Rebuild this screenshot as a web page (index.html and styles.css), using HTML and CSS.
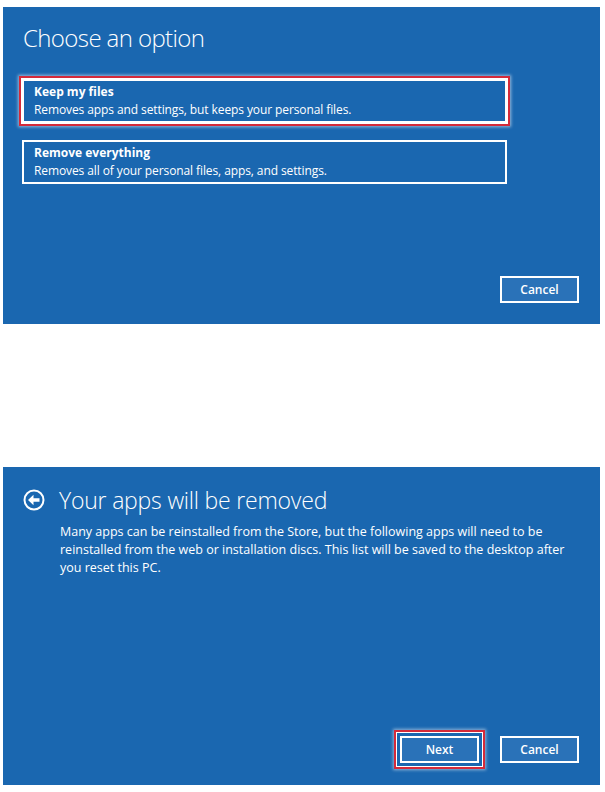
FILE: index.html
```html
<!DOCTYPE html>
<html>
<head>
<meta charset="utf-8">
<link rel="stylesheet" href="styles.css">
</head>
<body>
<div class="page">
  <section class="panel panel-one">
    <h1 class="title">Choose an option</h1>
    <div class="options">
      <div class="option focused">
        <div class="opt-title">Keep my files</div>
        <div class="opt-desc">Removes apps and settings, but keeps your personal files.</div>
      </div>
      <div class="option">
        <div class="opt-title">Remove everything</div>
        <div class="opt-desc">Removes all of your personal files, apps, and settings.</div>
      </div>
    </div>
    <div class="actions">
      <button class="btn">Cancel</button>
    </div>
  </section>
  <section class="panel panel-two">
    <div class="header">
      <svg class="back" width="22" height="22" viewBox="0 0 22 22">
        <circle cx="11" cy="11" r="9.5" fill="none" stroke="#fff" stroke-width="2"/>
        <path d="M5 11 L10.5 5.8 L10.5 9.2 L16.5 9.2 L16.5 12.8 L10.5 12.8 L10.5 16.2 Z" fill="#fff"/>
      </svg>
      <h1 class="title title-two">Your apps will be removed</h1>
    </div>
    <p class="body-text">Many apps can be reinstalled from the Store, but the following apps will need to be reinstalled from the web or installation discs. This list will be saved to the desktop after you reset this PC.</p>
    <div class="actions">
      <button class="btn focused-btn">Next</button>
      <button class="btn">Cancel</button>
    </div>
  </section>
</div>
</body>
</html>
```
FILE: styles.css
```css
html, body {
  margin: 0;
  padding: 0;
  background: #fff;
}
.page {
  padding: 7px 5px 0 3px;
  display: flex;
  flex-direction: column;
  gap: 143px;
  font-family: "Open Sans", "Noto Sans", sans-serif;
  color: #fff;
}
.panel {
  background: #1a67b0;
  display: flex;
  flex-direction: column;
  box-sizing: border-box;
}
.panel-one {
  height: 317px;
  padding: 15px 21px 21px 19px;
}
.panel-two {
  height: 318px;
  padding: 17px 21px 22px 20px;
}
.title {
  margin: 0;
  font-weight: 300;
  font-size: 24px;
  line-height: 32px;
  padding-left: 1px;
  letter-spacing: -0.6px;
}
.options {
  margin-top: 25px;
  display: flex;
  flex-direction: column;
  gap: 17px;
}
.option {
  width: 485px;
  box-sizing: border-box;
  border: 2px solid #fff;
  padding: 2px 10px;
  font-size: 12px;
  line-height: 18px;
}
.option.focused {
  box-shadow: 0 0 0 1px #fff, 0 0 0 3px #d42a3a, 0 0 3px 4px rgba(255,255,255,0.55);
}
.opt-title {
  font-weight: 700;
}
.opt-desc {
  letter-spacing: -0.1px;
}
.actions {
  margin-top: auto;
  display: flex;
  justify-content: flex-end;
  gap: 21px;
}
.btn {
  width: 79px;
  height: 27px;
  box-sizing: border-box;
  border: 2px solid #fff;
  background: #2a72b8;
  color: #fff;
  font-family: "Open Sans", "Noto Sans", sans-serif;
  font-size: 12px;
  font-weight: 600;
  padding: 0;
}
.focused-btn {
  box-shadow: 0 0 0 3px #1a67b0, 0 0 0 4px #fff, 0 0 0 6px #d42a3a, 0 0 3px 7px rgba(255,255,255,0.5);
}
.header {
  display: flex;
  align-items: center;
  gap: 14px;
}
.back {
  flex: none;
}
.title-two {
  font-size: 23px;
  padding-left: 0;
  letter-spacing: -0.2px;
}
.body-text {
  margin: 7px 0 0 37px;
  font-size: 12.5px;
  line-height: 18px;
  max-width: 510px;
}
```
